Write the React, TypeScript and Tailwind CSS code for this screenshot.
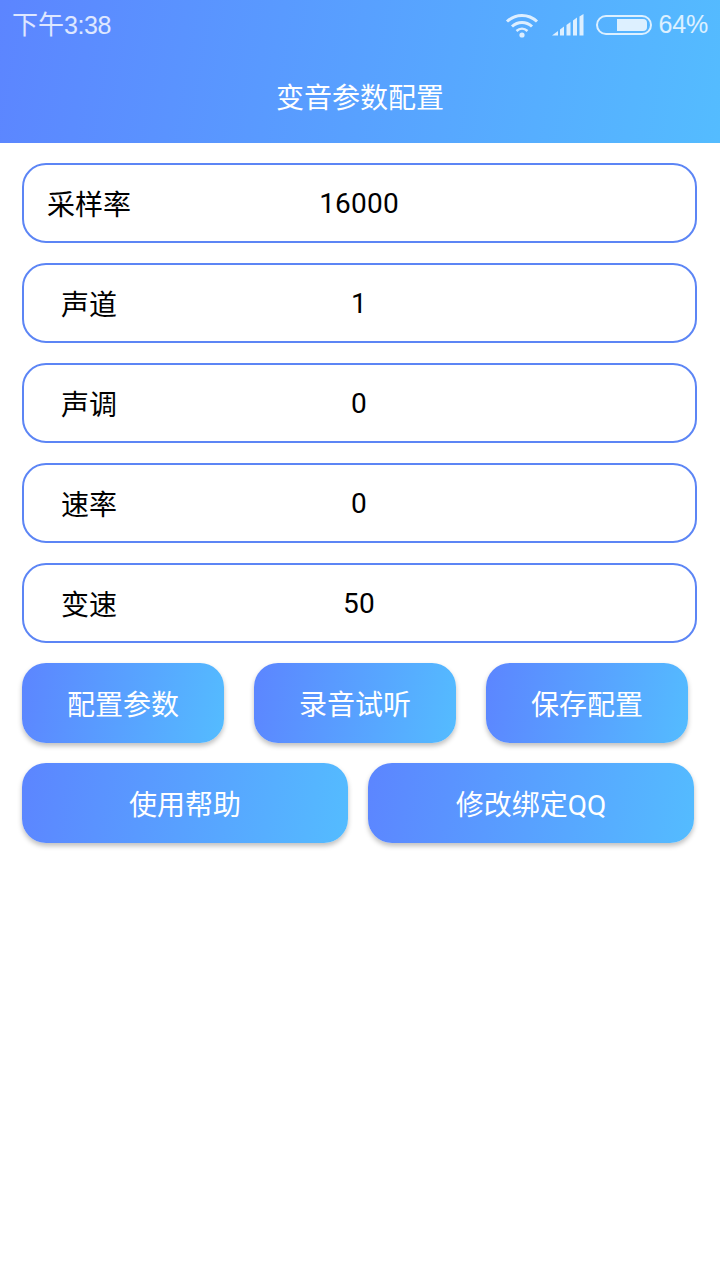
const rows = [
  { label: '采样率', value: '16000' },
  { label: '声道', value: '1' },
  { label: '声调', value: '0' },
  { label: '速率', value: '0' },
  { label: '变速', value: '50' },
];

const gradient = 'bg-[linear-gradient(100deg,#5c85ff,#54bcff)]';

function WifiIcon() {
  return (
    <svg width="34" height="26" viewBox="0 0 34 26" fill="none" stroke="currentColor" strokeWidth="3">
      <path d="M2 9.5C10.5 1.5 23.500 1.5 32 9.5" />
      <path d="M7 14.5C12.8 9.2 21.2 9.2 27 14.5" />
      <path d="M11.5 19C14.8 16 19.2 16 22.5 19" strokeWidth="2.5" />
      <circle cx="17" cy="23" r="2.6" fill="currentColor" stroke="none" />
    </svg>
  );
}

function SignalIcon() {
  return (
    <svg width="32" height="22" viewBox="0 0 32 22" fill="currentColor">
      <path d="M0 21.500L6 17V21.500Z" />
      <path d="M8 15.500L12 12.500V21.500H8Z" />
      <path d="M14.500 11L18.500 8V21.500H14.500Z" />
      <path d="M21 6.500L25 3.500V21.500H21Z" />
      <path d="M27.500 2.500L31.500 0V21.500H27.500Z" />
    </svg>
  );
}

function BatteryIcon() {
  return (
    <div className="flex h-[20px] w-[56px] items-center justify-end rounded-full border-2 border-white/80 pr-[3px]">
      <div className="h-[12px] w-[30px] rounded-r-[4px] bg-white/80" />
    </div>
  );
}

export default function App() {
  return (
    <div className="min-h-[1280px] bg-white font-['Roboto','Noto_Sans_CJK_SC',sans-serif]">
      <header className={`h-[143px] ${gradient}`}>
        <div className="flex h-[50px] items-center justify-between px-[12px] text-white/80">
          <span className="text-[26px]">
            下午<span className="font-['Liberation_Sans',sans-serif] text-[25px] tracking-[-0.4px]">3:38</span>
          </span>
          <div className="flex items-center">
            <WifiIcon />
            <div className="ml-[13px]">
              <SignalIcon />
            </div>
            <div className="ml-[12px]">
              <BatteryIcon />
            </div>
            <span className="ml-[7px] font-['Liberation_Sans',sans-serif] text-[25px] tracking-[-0.2px]">64%</span>
          </div>
        </div>
        <h1 className="mt-[24px] text-center text-[28px] leading-[50px] text-white">变音参数配置</h1>
      </header>

      <main className="px-[22px] pt-[20px]">
        <div className="flex w-[675px] flex-col gap-[20px]">
          {rows.map((row) => (
            <div
              key={row.label}
              className="grid h-[80px] grid-cols-[130px_1fr_130px] items-center rounded-[24px] border-2 border-[#5c85f5] pt-[2px] text-[28px] text-black"
            >
              <span className="pt-[3px] text-center">{row.label}</span>
              <span className="pr-[1px] text-center tracking-[0.2px]">{row.value}</span>
            </div>
          ))}
        </div>

        <div className="mt-[20px] flex gap-[30px]">
          {['配置参数', '录音试听', '保存配置'].map((text) => (
            <button
              key={text}
              className={`h-[80px] w-[202px] rounded-[24px] pt-[6px] text-[28px] text-white shadow-[0_3px_5px_rgba(0,0,0,0.25)] ${gradient}`}
            >
              {text}
            </button>
          ))}
        </div>

        <div className="mt-[20px] flex gap-[20px]">
          {['使用帮助', '修改绑定QQ'].map((text) => (
            <button
              key={text}
              className={`h-[80px] w-[326px] rounded-[24px] pt-[6px] text-[28px] text-white shadow-[0_3px_5px_rgba(0,0,0,0.25)] ${gradient}`}
            >
              {text}
            </button>
          ))}
        </div>
      </main>
    </div>
  );
}
